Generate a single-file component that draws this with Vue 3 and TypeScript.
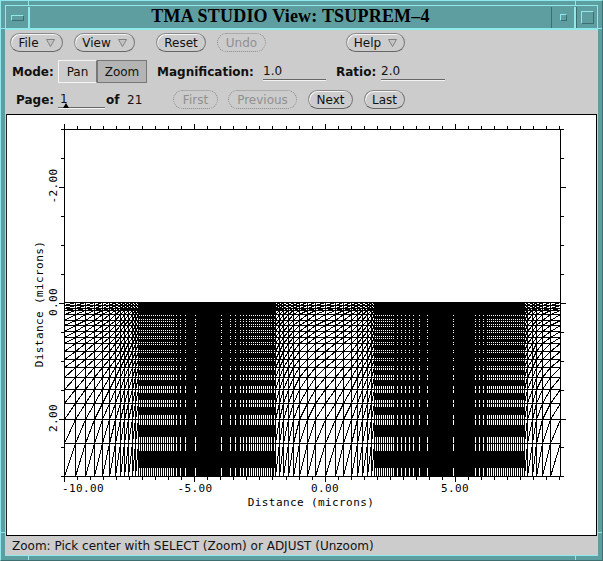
<template>
  <div class="window">
    <div class="titlebar">
      <div class="wm-btn wm-menu"><span class="menu-glyph"></span></div>
      <div class="title">TMA STUDIO View: TSUPREM–4</div>
      <div class="wm-btn wm-min"><span class="min-glyph"></span></div>
      <div class="wm-btn wm-max"><span class="max-glyph"></span></div>
    </div>

    <div class="panel">
      <div class="row row-buttons">
        <button class="pill file">File
          <svg class="arrow" viewBox="0 0 9 8"><path d="M.5.5h8L4.5 7.5z" /></svg>
        </button>
        <button class="pill view">View
          <svg class="arrow" viewBox="0 0 9 8"><path d="M.5.5h8L4.5 7.5z" /></svg>
        </button>
        <button class="pill reset">Reset</button>
        <button class="pill undo off">Undo</button>
        <button class="pill help">Help
          <svg class="arrow" viewBox="0 0 9 8"><path d="M.5.5h8L4.5 7.5z" /></svg>
        </button>
      </div>

      <div class="row row-mode">
        <b class="mode-label">Mode:</b>
        <div class="toggle">
          <span class="seg pan">Pan</span>
          <span class="seg zoom">Zoom</span>
        </div>
        <b class="mag-label">Magnification:</b>
        <span class="field mag-field">1.0</span>
        <b class="ratio-label">Ratio:</b>
        <span class="field ratio-field">2.0</span>
      </div>

      <div class="row row-page">
        <b class="page-label">Page:</b>
        <span class="slider">1<i class="thumb"></i></span>
        <b class="of-label">of</b>
        <span class="total">21</span>
        <button class="pill first off">First</button>
        <button class="pill prev off">Previous</button>
        <button class="pill next">Next</button>
        <button class="pill last">Last</button>
      </div>
    </div>

    <div class="plot">
      <svg class="chart" viewBox="7 115 590 420" width="590" height="420">
        <path class="mesh" :d="meshPath" />
        <path class="mesh" :d="tickPath" />
        <text class="lbl" x="62" y="492">-10.00</text>
        <text class="lbl mid" x="195" y="492">-5.00</text>
        <text class="lbl mid" x="325" y="492">0.00</text>
        <text class="lbl mid" x="455" y="492">5.00</text>
        <text class="lbl mid" x="311" y="506">Distance (microns)</text>
        <text class="lbl mid" transform="translate(57 186) rotate(-90)">-2.00</text>
        <text class="lbl mid" transform="translate(57 302) rotate(-90)">0.00</text>
        <text class="lbl mid" transform="translate(57 418) rotate(-90)">2.00</text>
        <text class="lbl mid" transform="translate(43 304) rotate(-90)">Distance (microns)</text>
      </svg>
    </div>

    <div class="status">Zoom: Pick center with SELECT (Zoom) or ADJUST (Unzoom)</div>
    <i class="inner-edge"></i>
    <i class="notch n-tl"></i>
    <i class="notch n-tr"></i>
    <i class="notch n-bl"></i>
    <i class="notch n-br"></i>
    <i class="notch n-lt"></i>
    <i class="notch n-rt"></i>
    <i class="notch n-lb"></i>
    <i class="notch n-rb"></i>
  </div>
</template>

<script setup lang="ts">
import { computed } from 'vue'

const LEFT = 64
const RIGHT = 560
const TOP = 129
const BOTTOM = 476

// rows of the grid, they get wider going down
const rows = [302, 305, 308, 310, 314, 320, 325, 331, 337, 343, 351, 359, 367, 377, 389, 403, 419, 443, 476]

// pixel columns that stay empty inside the dense parts
const range = (a: number, b: number, step: number) => {
  const out: number[] = []
  for (let v = a; v <= b; v += step) out.push(v)
  return out
}

const gapsA = [...range(141, 171, 2), 173, 176, 180, 185, 195, 221, 230, 235, 240, 243, 246, 249, 251, ...range(253, 272, 2)]
const gapsB = [...range(377, 393, 2), 397, 401, 405, 409, 413, 419, 427, 453, 475, 479, 483, 487, ...range(489, 523, 2)]

const denseCols = (from: number, to: number, gaps: number[]) =>
  range(from, to, 1).filter((x) => !gaps.includes(x))

const columns = computed(() => [
  64, 75, 85, 94, 102, 109, 115, 120, 124, 128, 132, 135, 138,
  ...denseCols(140, 273, gapsA),
  275, 279, 283, 288, 293, 299, 307, 315, 325, 335, 343, 351, 357, 362, 367, 371, 374,
  ...denseCols(376, 524, gapsB),
  527, 532, 536, 542, 550, 560
])

const meshPath = computed(() => {
  const xs = columns.value
  let d = ''
  for (const y of rows) d += `M${LEFT} ${y + 0.5}H${RIGHT + 1}`
  for (const x of xs) d += `M${x + 0.5} 302V${BOTTOM + 1}`
  for (let j = 0; j < rows.length - 1; j++) {
    for (let i = 0; i < xs.length - 1; i++) {
      if (xs[i + 1] - xs[i] < 2) continue
      d += `M${xs[i] + 0.5} ${rows[j + 1] + 0.5}L${xs[i + 1] + 0.5} ${rows[j] + 0.5}`
    }
  }
  return d
})

const tickPath = computed(() => {
  let d = `M${LEFT + 0.5} ${TOP + 0.5}H${RIGHT + 0.5}V${BOTTOM + 0.5}H${LEFT + 0.5}Z`
  for (let k = 0; k <= 38; k++) {
    const x = Math.round(LEFT + k * 13.03) + 0.5
    const len = k % 10 === 0 ? 5 : 3
    d += `M${x} ${BOTTOM}v${len + 1}M${x} ${TOP}v${-len}`
  }
  for (let k = 0; k <= 12; k++) {
    const y = Math.round(TOP + k * 28.95) + 0.5
    const len = k % 4 === 2 ? 5 : 3
    d += `M${LEFT} ${y}h${-len}M${RIGHT} ${y}h${len + 1}`
  }
  return d
})
</script>

<style>
html,
body {
  margin: 0;
  background: #5f9ea0;
}
</style>

<style scoped>
.window {
  position: relative;
  width: 603px;
  height: 561px;
  box-sizing: border-box;
  padding: 6px 5px 5px 5px;
  display: flex;
  flex-direction: column;
  background: #5f9ea0;
  border: 1px solid #3d6e70;
  border-top-color: #8fe8ea;
  border-left-color: #8fe8ea;
  overflow: hidden;
  font-family: 'DejaVu Sans', sans-serif;
  font-size: 12px;
  color: #111;
}

.titlebar {
  height: 23px;
  box-sizing: border-box;
  display: flex;
  flex-shrink: 0;
  border-bottom: 2px solid #8fe8ea;
}

.wm-btn {
  display: flex;
  align-items: center;
  justify-content: center;
  box-sizing: border-box;
  border-left: 1px solid #3d6e70;
  border-right: 2px solid #8fe8ea;
}

.wm-menu {
  width: 24px;
  border-left: none;
}

.menu-glyph {
  width: 11px;
  height: 4px;
  border: 1px solid #8fe8ea;
  border-right-color: #3d6e70;
  border-bottom-color: #3d6e70;
}

.title {
  flex: 1;
  text-align: center;
  font-family: 'Liberation Serif', serif;
  font-weight: bold;
  font-size: 18px;
  letter-spacing: 0.2px;
  line-height: 18px;
  color: #000;
}

.wm-min {
  width: 25px;
}

.min-glyph {
  width: 5px;
  height: 5px;
  border: 1px solid #8fe8ea;
  border-right-color: #3d6e70;
  border-bottom-color: #3d6e70;
}

.wm-max {
  width: 21px;
  border-right: none;
}

.max-glyph {
  width: 11px;
  height: 11px;
  border: 1px solid #8fe8ea;
  border-right-color: #3d6e70;
  border-bottom-color: #3d6e70;
}

.panel {
  height: 84px;
  flex-shrink: 0;
  background: #cccccc;
  box-sizing: border-box;
  padding-top: 3px;
}

.row {
  display: flex;
  align-items: center;
  white-space: nowrap;
}

.row-buttons {
  height: 19px;
  padding-left: 4px;
}

.row-mode {
  height: 23px;
  margin-top: 8px;
  padding-left: 6px;
}

.row-page {
  height: 19px;
  margin-top: 7px;
  padding-left: 10px;
}

.pill {
  box-sizing: border-box;
  height: 19px;
  padding: 0;
  background: #cccccc;
  border: 1px solid #8a8a8a;
  border-right-color: #777;
  border-bottom-color: #666;
  border-radius: 10px;
  font: inherit;
  color: #111;
  display: inline-flex;
  align-items: center;
  justify-content: center;
  gap: 7px;
  box-shadow: inset 1px 1px 0 #f4f4f4;
}

.pill.off {
  border: 1px dotted #8a8a8a;
  color: #909090;
  box-shadow: none;
}

.arrow {
  width: 9px;
  height: 8px;
  fill: #c4c4c4;
  stroke: #808080;
  stroke-width: 1;
}

.file { width: 53px; }
.view { width: 61px; margin-left: 11px; }
.reset { width: 50px; margin-left: 21px; }
.undo { width: 49px; margin-left: 11px; }
.help { width: 59px; margin-left: 80px; }

b {
  font-weight: bold;
}

.mode-label { width: 46px; }

.toggle {
  display: flex;
  height: 23px;
}

.seg {
  display: flex;
  align-items: center;
  justify-content: center;
  box-sizing: border-box;
  border: 1px solid #777;
}

.pan {
  width: 39px;
  background: #cccccc;
  border-color: #f4f4f4 #777 #f4f4f4 #f4f4f4;
}

.zoom {
  width: 50px;
  background: #b4b4b4;
  border-color: #777;
}

.mag-label { margin-left: 10px; width: 106px; }
.ratio-label { margin-left: 10px; width: 45px; }

.field {
  box-sizing: border-box;
  height: 16px;
  line-height: 15px;
  border-bottom: 1px solid #666;
  box-shadow: 0 1px 0 #f4f4f4;
  margin-top: 1px;
}

.mag-field { width: 63px; }
.ratio-field { width: 64px; }

.page-label { width: 42px; }

.slider {
  position: relative;
  box-sizing: border-box;
  width: 47px;
  height: 16px;
  line-height: 15px;
  padding-left: 2px;
  border-bottom: 1px solid #666;
  box-shadow: 0 1px 0 #f4f4f4;
}

.thumb {
  position: absolute;
  left: 5px;
  bottom: -1px;
  width: 0;
  height: 0;
  border-left: 3px solid transparent;
  border-right: 3px solid transparent;
  border-bottom: 5px solid #000;
}

.of-label { margin-left: 1px; width: 21px; }
.total { width: 46px; }

.first { width: 45px; }
.prev { width: 69px; margin-left: 10px; }
.next { width: 45px; margin-left: 11px; }
.last { width: 41px; margin-left: 11px; }

.plot {
  flex-shrink: 0;
  height: 422px;
  box-sizing: border-box;
  background: #fff;
  border-top: 1px solid #000;
  border-bottom: 1px solid #000;
  border-left: 1px solid #222;
  border-right: 1px solid #000;
}

.chart {
  display: block;
}

.mesh {
  fill: none;
  stroke: #000;
  stroke-width: 1;
  shape-rendering: crispEdges;
}

.lbl {
  font-family: 'DejaVu Sans Mono', monospace;
  font-size: 11px;
  letter-spacing: 0.4px;
  fill: #000;
}

.mid {
  text-anchor: middle;
}

.status {
  flex: 1;
  background: #cccccc;
  padding-left: 6px;
  line-height: 20px;
}

.inner-edge {
  position: absolute;
  left: 4px;
  top: 4px;
  right: 4px;
  bottom: 4px;
  border: 1px solid #8fe8ea;
  pointer-events: none;
}

.notch {
  position: absolute;
  background: #8fe8ea;
}

.n-tl { left: 27px; top: 0; width: 1px; height: 5px; }
.n-tr { left: 574px; top: 0; width: 1px; height: 5px; }
.n-bl { left: 27px; bottom: 0; width: 1px; height: 5px; }
.n-br { left: 574px; bottom: 0; width: 1px; height: 5px; }
.n-lt { left: 0; top: 27px; width: 5px; height: 1px; }
.n-rt { right: 0; top: 27px; width: 5px; height: 1px; }
.n-lb { left: 0; top: 531px; width: 5px; height: 1px; }
.n-rb { right: 0; top: 531px; width: 5px; height: 1px; }
</style>
